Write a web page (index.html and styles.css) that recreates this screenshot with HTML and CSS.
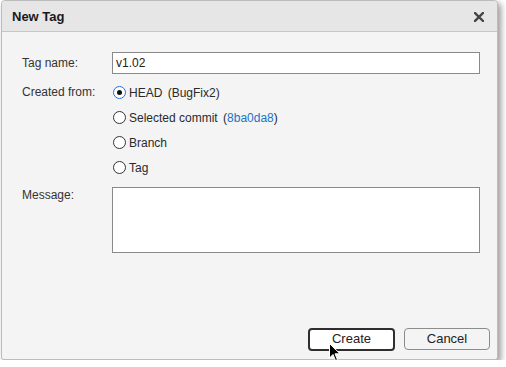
FILE: index.html
```html
<!DOCTYPE html>
<html>
<head>
<meta charset="utf-8">
<link rel="stylesheet" href="styles.css">
</head>
<body>
<div class="dialog">
  <div class="titlebar">
    <span class="title">New Tag</span>
    <svg class="close" width="10" height="10" viewBox="0 0 10 10"><path d="M1 1 L9 9 M9 1 L1 9" stroke="#444" stroke-width="2.4" stroke-linecap="square"/></svg>
  </div>
  <div class="content">
    <div class="row row-name">
      <span class="label">Tag name:</span>
      <div class="input">v1.02</div>
    </div>
    <div class="row row-from">
      <span class="label">Created from:</span>
      <div class="options">
        <div class="option"><span class="radio checked"></span><span>HEAD <span class="paren">(BugFix2)</span></span></div>
        <div class="option"><span class="radio"></span><span>Selected commit <span class="paren">(<span class="link">8ba0da8</span>)</span></span></div>
        <div class="option"><span class="radio"></span><span>Branch</span></div>
        <div class="option"><span class="radio"></span><span>Tag</span></div>
      </div>
    </div>
    <div class="row row-msg">
      <span class="label label-top">Message:</span>
      <div class="textarea"></div>
    </div>
    <div class="buttons">
      <div class="btn btn-default">Create</div>
      <div class="btn">Cancel</div>
    </div>
  </div>
  <svg class="cursor" width="12" height="19" viewBox="0 0 12 19"><path d="M0.5 0.5 L0.5 15 L4 11.5 L6.5 17.5 L8.5 16.7 L6 10.8 L11 10.8 Z" fill="#000" stroke="#fff" stroke-width="1"/></svg>
</div>
</body>
</html>
```
FILE: styles.css
```css
html, body {
  margin: 0;
  padding: 0;
  background: #ffffff;
}
body {
  font-family: "Liberation Sans", Arial, sans-serif;
  font-size: 12px;
  color: #222;
}
.dialog {
  position: relative;
  margin-left: 1px;
  width: 495px;
  height: 358px;
  border: 1px solid #bcbcbc;
  border-radius: 4px 4px 3px 3px;
  background: #f4f4f4;
  box-shadow: 3px 3px 6px rgba(0,0,0,0.4);
  display: flex;
  flex-direction: column;
  overflow: visible;
}
.titlebar {
  height: 30px;
  flex: none;
  background: #e6e6e6;
  border-bottom: 1px solid #c6c6c6;
  border-radius: 4px 4px 0 0;
  display: flex;
  align-items: center;
  justify-content: space-between;
  padding: 0 13px 0 10px;
}
.title {
  font-weight: bold;
  font-size: 13px;
  color: #1a1a1a;
}
.close {
  display: block;
  margin-top: 1px;
}
.content {
  flex: 1;
  display: flex;
  flex-direction: column;
  padding: 20px 7px 8px 20px;
}
.row {
  display: flex;
}
.label {
  width: 90px;
  flex: none;
  color: #333;
}
.row-name {
  align-items: center;
  height: 22px;
  margin-right: 10px;
}
.input {
  flex: 1;
  height: 20px;
  border: 1px solid #8a8a8a;
  background: #fff;
  line-height: 20px;
  padding-left: 3px;
  color: #222;
}
.row-from {
  margin-top: 6px;
}
.row-from .label {
  line-height: 25px;
}
.options {
  display: flex;
  flex-direction: column;
}
.option {
  height: 25px;
  display: flex;
  align-items: center;
  gap: 3px;
  margin-left: 1px;
  color: #2a2a2a;
}
.paren {
  margin-left: 2px;
}
.radio {
  width: 11px;
  height: 11px;
  border: 1px solid #333;
  border-radius: 50%;
  background: #fff;
  position: relative;
  flex: none;
}
.radio.checked {
  border-color: #1a73e8;
}
.radio.checked::after {
  content: "";
  position: absolute;
  left: 3px;
  top: 3px;
  width: 5px;
  height: 5px;
  border-radius: 50%;
  background: #111;
}
.link {
  color: #1a73c8;
}
.row-msg {
  margin-top: 7px;
  margin-right: 10px;
}
.label-top {
  padding-top: 1px;
}
.textarea {
  flex: 1;
  height: 64px;
  border: 1px solid #8a8a8a;
  background: #fff;
}
.buttons {
  margin-top: auto;
  display: flex;
  justify-content: flex-end;
  gap: 9px;
}
.btn {
  width: 84px;
  height: 20px;
  border: 1px solid #8c8c8c;
  border-radius: 4px;
  background: #f4f4f4;
  text-align: center;
  line-height: 20px;
  color: #222;
  font-size: 13px;
}
.btn-default {
  width: 83px;
  border: 2px solid #2e2e2e;
  height: 19px;
  line-height: 18px;
  background: #fff;
}
.cursor {
  position: absolute;
  left: 327px;
  top: 342px;
}
```
